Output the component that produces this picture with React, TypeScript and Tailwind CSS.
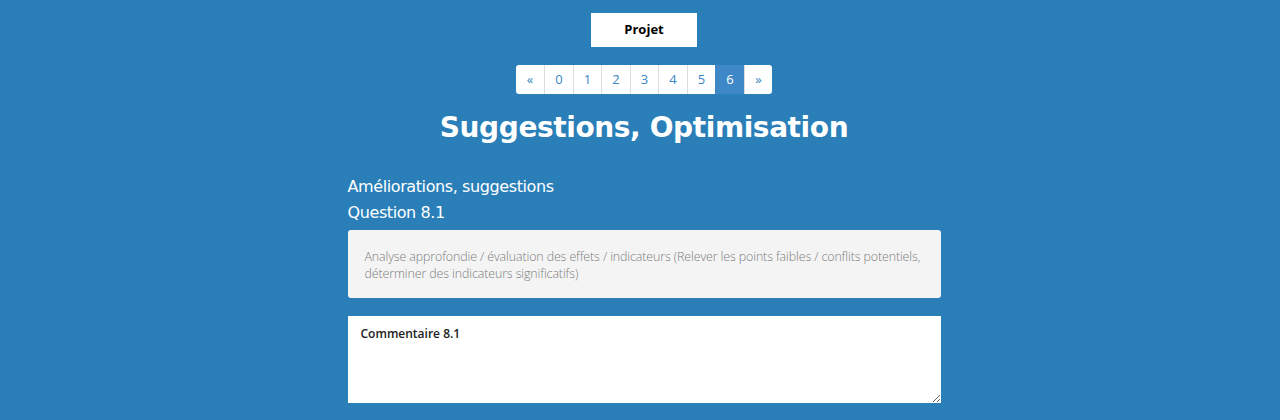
export default function App() {
  const pages = ["«", "0", "1", "2", "3", "4", "5", "6", "»"];
  return (
    <div className="h-[420px] w-full overflow-hidden bg-[#2a7fb9] pl-2 font-['Open_Sans',sans-serif]">
      <div className="flex flex-col items-center pt-[13px]">
        <button className="h-[34px] w-[106px] bg-white text-[13px] font-bold text-black">Projet</button>

        <ul className="mt-[18px] flex h-[29px] overflow-hidden rounded-[3px] bg-white">
          {pages.map((p, i) => (
            <li
              key={i}
              className={
                p === "6"
                  ? "flex w-[28.5px] items-center justify-center border-l border-[#3f88c8] bg-[#3f88c8] text-[13px] text-white"
                  : i === 0
                  ? "flex w-[28.5px] items-center justify-center text-[13px] text-[#3a86c6]"
                  : "flex w-[28.5px] items-center justify-center border-l border-[#dddddd] text-[13px] text-[#3a86c6]"
              }
            >
              {p}
            </li>
          ))}
        </ul>

        <h1 className="mt-[14px] font-['DejaVu_Sans',sans-serif] text-[28px] font-bold leading-[40px] tracking-[-0.4px] text-white">
          Suggestions, Optimisation
        </h1>

        <div className="mt-[26px] w-[593px]">
          <p className="font-['DejaVu_Sans',sans-serif] text-[16px] leading-[26px] tracking-[-0.4px] text-white">
            Améliorations, suggestions
          </p>
          <p className="font-['DejaVu_Sans',sans-serif] text-[16px] leading-[26px] tracking-[-0.4px] text-white">
            Question 8.1
          </p>

          <div className="mt-[4px] rounded-[3px] bg-[#f4f4f4] px-[17px] pt-[18px] pb-[16px] text-[12.4px] font-light leading-[17px] tracking-[-0.1px] text-[#7c7c7c]">
            Analyse approfondie / évaluation des effets / indicateurs (Relever les points faibles / conflits potentiels,
            déterminer des indicateurs significatifs)
          </div>

          <textarea
            defaultValue="Commentaire 8.1"
            className="mt-[18px] block h-[87px] w-full resize-y bg-white px-[13px] py-[9px] text-[12px] font-semibold text-[#222] outline-none"
          />
        </div>
      </div>
    </div>
  );
}
